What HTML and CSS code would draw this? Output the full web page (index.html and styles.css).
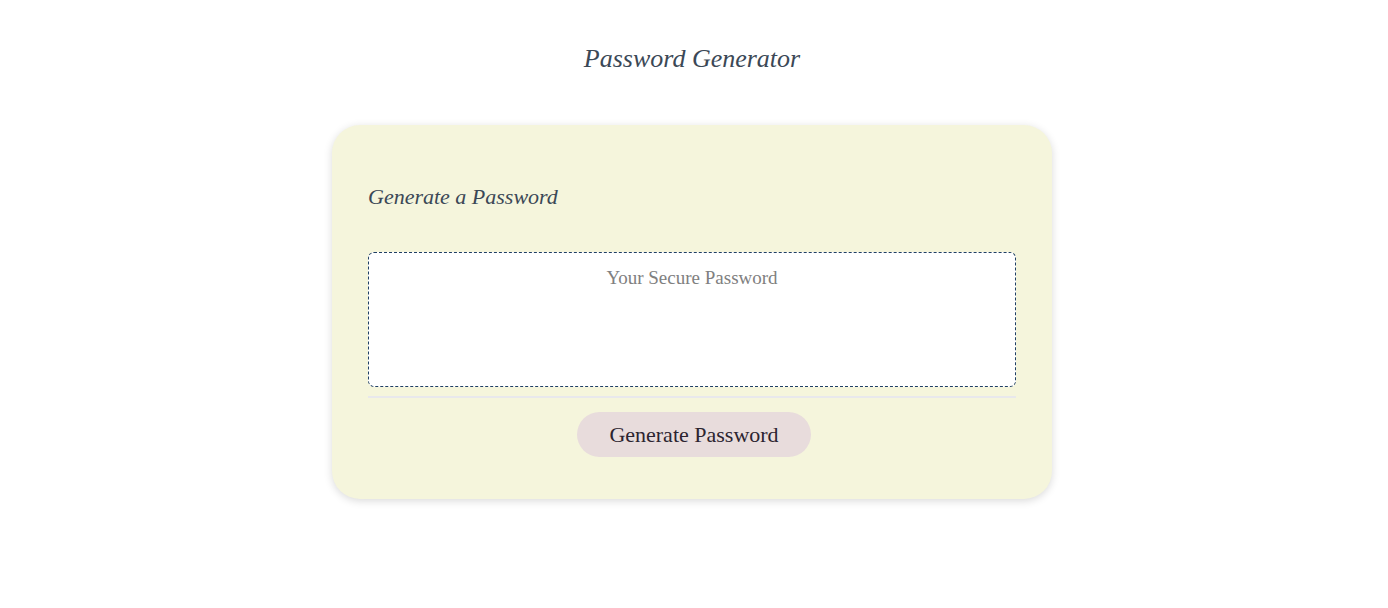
FILE: index.html
```html
<!DOCTYPE html>
<html lang="en">
<head>
<meta charset="utf-8">
<meta name="viewport" content="width=device-width, initial-scale=1">
<title>Password Generator</title>
<link rel="stylesheet" href="styles.css">
</head>
<body>
<div class="wrapper">
  <header><h1 class="title">Password Generator</h1></header>
  <main class="card">
    <h2 class="card-title">Generate a Password</h2>
    <textarea class="password" readonly placeholder="Your Secure Password" aria-label="Generated password"></textarea>
    <div class="card-footer">
      <button class="btn" type="button">Generate Password</button>
    </div>
  </main>
</div>
</body>
</html>
```

FILE: styles.css
```css
* { box-sizing: border-box; }

body {
  margin: 0;
  background: #fff;
  color: #3b4856;
}

.wrapper {
  padding: 36px 4px 36px 0;
}

.title,
.card-title {
  margin: 0;
  font-family: "Liberation Serif", serif;
  font-style: italic;
  font-weight: 400;
}

.title {
  font-size: 26px;
  line-height: 46px;
  text-align: center;
}

.card {
  width: 100%;
  max-width: 720px;
  margin: 43px auto 0;
  padding: 52px 36px 42px;
  border-radius: 28px;
  background: #f5f5dc;
  box-shadow: 0 2px 8px rgba(0, 0, 0, 0.15);
}

.card-title {
  font-size: 22px;
  line-height: 40px;
}

.password {
  display: block;
  width: 100%;
  height: 135px;
  margin-top: 35px;
  padding: 13px;
  border: 1px dashed #1f3f63;
  border-radius: 6px;
  background: #fff;
  color: #3b4856;
  font-family: "Liberation Serif", serif;
  font-size: 19px;
  line-height: 24px;
  text-align: center;
  resize: none;
}

.password::placeholder {
  color: #808080;
  opacity: 1;
}

.card-footer {
  display: flex;
  justify-content: center;
  margin-top: 9px;
  padding: 14px 0 0 4px;
  border-top: 2px solid #e8e8ec;
}

.btn {
  padding: 10px 32px;
  border: 0;
  border-radius: 24px;
  background: #e8dcdc;
  color: #2c2430;
  font-family: "Liberation Serif", serif;
  font-size: 22px;
  line-height: 25px;
  cursor: pointer;
}
```
